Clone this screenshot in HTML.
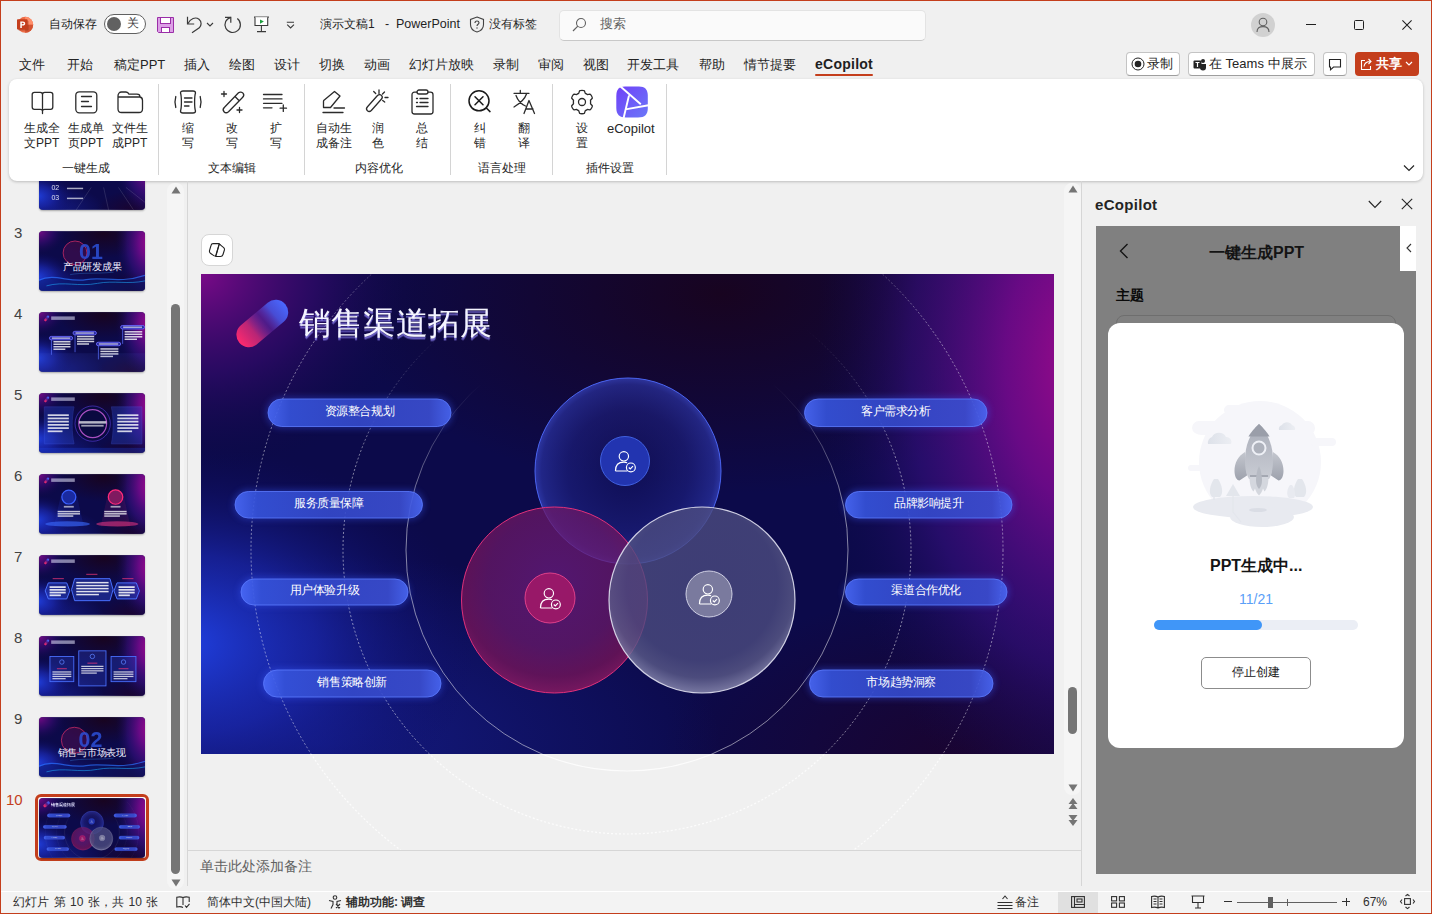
<!DOCTYPE html>
<html><head><meta charset="utf-8">
<style>
*{box-sizing:border-box;margin:0;padding:0}
html,body{width:1432px;height:914px;overflow:hidden}
body{position:relative;background:#f0f0f0;font-family:"Liberation Sans",sans-serif;color:#242424;font-size:13px}
.a{position:absolute}
.t{position:absolute;white-space:nowrap;line-height:1}
svg{position:absolute;overflow:visible}
</style></head><body>
<!-- window border -->
<div class="a" style="left:0;top:0;width:1432px;height:914px;border:1px solid #c43e1c;border-width:1px 1px 1px 1px;z-index:50;pointer-events:none"></div>

<!-- TITLE BAR -->
<svg style="left:17px;top:16px" width="17" height="17" viewBox="0 0 17 17">
 <circle cx="8.2" cy="8.8" r="8" fill="#ed6c47"/>
 <path d="M8.2 0.8 A8 8 0 0 1 16.2 8.8 L8.2 8.8Z" fill="#ff8f6b"/>
 <path d="M8.2 8.8 L16.2 8.8 A8 8 0 0 1 8.2 16.8Z" fill="#d35230"/>
 <rect x="1" y="4.8" width="10.6" height="9.6" rx="0.8" fill="#7a2a12" opacity=".35"/>
 <rect x="0" y="3.3" width="10.6" height="10.3" rx="0.8" fill="#c43e1c"/>
 <path d="M3.3 12V5.4h2.6c1.5 0 2.3.7 2.3 2s-.9 2.1-2.3 2.1H4.8V12z M4.8 6.7v1.6h1c.6 0 1-.3 1-.8s-.4-.8-1-.8z" fill="#fff"/>
</svg>
<div class="t" style="left:49px;top:18px;font-size:12px;color:#1f1f1f">自动保存</div>
<div class="a" style="left:104px;top:14px;width:42px;height:20px;border:1px solid #616161;border-radius:10px;background:#fff"></div>
<div class="a" style="left:107px;top:17px;width:14px;height:14px;border-radius:50%;background:#616161"></div>
<div class="t" style="left:127px;top:17px;font-size:12px;color:#424242">关</div>
<svg style="left:157px;top:17px" width="17" height="16" viewBox="0 0 17 16">
 <path d="M0.5 0.5H16.5V15.5H1.5L0.5 14.5Z" fill="#dca0e6" stroke="#9b2ea8" stroke-width="1"/>
 <rect x="3.5" y="0.5" width="10" height="6" fill="#fff" stroke="#9b2ea8" stroke-width="1"/>
 <rect x="4.5" y="10.5" width="8" height="5" fill="#fff" stroke="#9b2ea8" stroke-width="1"/>
</svg>
<svg style="left:185px;top:15px" width="20" height="20" viewBox="0 0 20 20">
 <path d="M2.5 1.8V9H9.2" fill="none" stroke="#3a3a3a" stroke-width="1.2"/>
 <path d="M2.8 8.7 C5.5 3.5 10.5 1.5 14 4.3 C17 6.8 16.5 10.5 14.3 12.8 L7 17.8" fill="none" stroke="#3a3a3a" stroke-width="1.2"/>
</svg>
<svg style="left:206px;top:22px" width="8" height="5" viewBox="0 0 8 5"><path d="M1 1l3 3 3-3" fill="none" stroke="#3a3a3a" stroke-width="1.1"/></svg>
<svg style="left:222px;top:15px" width="20" height="20" viewBox="0 0 20 20">
 <path d="M3 2.3H8.8V7.7" fill="none" stroke="#3a3a3a" stroke-width="1.2"/>
 <path d="M8.8 2.3 A7.7 7.7 0 1 0 15.3 3.6" fill="none" stroke="#3a3a3a" stroke-width="1.2"/>
</svg>
<svg style="left:252px;top:16px" width="18" height="17" viewBox="0 0 18 17">
 <path d="M2 1.1H17" stroke="#3a3a3a" stroke-width="1.1"/>
 <path d="M3 1.2V9.5H15.7V1.2" fill="#fff" stroke="#3a3a3a" stroke-width="1.1"/>
 <path d="M9.4 9.5V15.4M5 15.6H14" stroke="#3a3a3a" stroke-width="1.1"/>
 <path d="M8 3.4V7.7L11.9 5.5Z" fill="#1e9e3e"/>
</svg>
<svg style="left:283px;top:21px" width="12" height="8" viewBox="0 0 12 8"><path d="M3.8 1.3H11M4.2 3.6L7.6 6.9 11 3.6" fill="none" stroke="#3a3a3a" stroke-width="1.1"/></svg>
<div class="t" style="left:320px;top:18px;font-size:12px;color:#1f1f1f">演示文稿1</div><div class="t" style="left:385px;top:18px;font-size:12.5px;color:#1f1f1f">-</div><div class="t" style="left:396px;top:18px;font-size:12.5px;color:#1f1f1f">PowerPoint</div>
<svg style="left:469px;top:16px" width="16" height="17" viewBox="0 0 16 17">
 <path d="M8 1 L14.5 3.5 V8.5 C14.5 12.5 11.5 15 8 16 C4.5 15 1.5 12.5 1.5 8.5 V3.5Z" fill="none" stroke="#424242" stroke-width="1.1"/>
 <path d="M6 7 C6 5.5 7 5 8 5 C9.2 5 10 5.8 10 6.8 C10 8.3 8 8.3 8 10" fill="none" stroke="#424242" stroke-width="1.1"/>
 <circle cx="8" cy="12" r=".7" fill="#424242"/>
</svg>
<div class="t" style="left:489px;top:18px;font-size:12px;color:#1f1f1f">没有标签</div>
<div class="a" style="left:559px;top:10px;width:367px;height:31px;background:#fafafa;border:1px solid #e3e3e3;border-bottom-color:#c8c8c8;border-radius:5px"></div>
<svg style="left:572px;top:17px" width="15" height="15" viewBox="0 0 15 15"><circle cx="9" cy="6" r="4.5" fill="none" stroke="#616161" stroke-width="1.1"/><path d="M5.8 9.2L1 14" stroke="#616161" stroke-width="1.2"/></svg>
<div class="t" style="left:600px;top:17px;font-size:13px;color:#616161">搜索</div>
<div class="a" style="left:1251px;top:13px;width:24px;height:24px;border-radius:50%;background:#d1d1d1"></div>
<svg style="left:1255px;top:16px" width="16" height="17" viewBox="0 0 16 17"><circle cx="8" cy="6" r="3.8" fill="none" stroke="#616161" stroke-width="1.1"/><path d="M2 16 C2 12 4.5 10.6 8 10.6 C11.5 10.6 14 12 14 16" fill="none" stroke="#616161" stroke-width="1.1"/></svg>
<div class="a" style="left:1306px;top:24px;width:10px;height:1px;background:#1f1f1f"></div>
<div class="a" style="left:1354px;top:20px;width:10px;height:10px;border:1px solid #1f1f1f;border-radius:1.5px"></div>
<svg style="left:1402px;top:20px" width="10" height="10" viewBox="0 0 10 10"><path d="M0.4 0.4L9.6 9.6M9.6 0.4L0.4 9.6" stroke="#1f1f1f" stroke-width="1.05"/></svg>


<!-- MENU TABS -->
<div class="t" style="left:19px;top:58px;font-size:13px;color:#242424">文件</div>
<div class="t" style="left:67px;top:58px;font-size:13px;color:#242424">开始</div>
<div class="t" style="left:114px;top:58px;font-size:13px;color:#242424">稿定PPT</div>
<div class="t" style="left:184px;top:58px;font-size:13px;color:#242424">插入</div>
<div class="t" style="left:229px;top:58px;font-size:13px;color:#242424">绘图</div>
<div class="t" style="left:274px;top:58px;font-size:13px;color:#242424">设计</div>
<div class="t" style="left:319px;top:58px;font-size:13px;color:#242424">切换</div>
<div class="t" style="left:364px;top:58px;font-size:13px;color:#242424">动画</div>
<div class="t" style="left:409px;top:58px;font-size:13px;color:#242424">幻灯片放映</div>
<div class="t" style="left:493px;top:58px;font-size:13px;color:#242424">录制</div>
<div class="t" style="left:538px;top:58px;font-size:13px;color:#242424">审阅</div>
<div class="t" style="left:583px;top:58px;font-size:13px;color:#242424">视图</div>
<div class="t" style="left:627px;top:58px;font-size:13px;color:#242424">开发工具</div>
<div class="t" style="left:699px;top:58px;font-size:13px;color:#242424">帮助</div>
<div class="t" style="left:744px;top:58px;font-size:13px;color:#242424">情节提要</div>
<div class="t" style="left:815px;top:57px;font-size:14px;font-weight:bold;color:#1f1f1f;letter-spacing:.25px">eCopilot</div>
<div class="a" style="left:815px;top:74px;width:58px;height:2px;background:#c43e1c;border-radius:1px"></div>
<div class="a" style="left:1126px;top:52px;width:54px;height:24px;border:1px solid #c4c4c4;border-bottom-color:#9e9e9e;border-radius:4px;background:#fff"></div>
<svg style="left:1131px;top:57px" width="14" height="14" viewBox="0 0 14 14"><circle cx="7" cy="7" r="6" fill="none" stroke="#242424" stroke-width="1"/><circle cx="7" cy="7" r="3.3" fill="#242424"/></svg>
<div class="t" style="left:1147px;top:56.5px;font-size:13px;color:#242424">录制</div>
<div class="a" style="left:1188px;top:52px;width:127px;height:24px;border:1px solid #c4c4c4;border-bottom-color:#9e9e9e;border-radius:4px;background:#fff"></div>
<svg style="left:1193px;top:57px" width="14" height="14" viewBox="0 0 14 14"><circle cx="10" cy="4" r="2" fill="#242424"/><path d="M7 7h6v3.5a3 3 0 0 1-6 0z" fill="#242424"/><rect x="0.5" y="3.5" width="8" height="8" rx="1" fill="#242424"/><path d="M2.5 5.5h4M4.5 5.5v4.5" stroke="#fff" stroke-width="1.2"/></svg>
<div class="t" style="left:1209px;top:56.5px;font-size:13px;color:#242424">在 Teams 中展示</div>
<div class="a" style="left:1323px;top:52px;width:24px;height:24px;border:1px solid #c4c4c4;border-bottom-color:#9e9e9e;border-radius:4px;background:#fff"></div>
<svg style="left:1328px;top:58px" width="14" height="13" viewBox="0 0 14 13"><path d="M1.5 1.5h11v7.5h-7l-3 2.8v-2.8h-1z" fill="none" stroke="#242424" stroke-width="1.1"/></svg>
<div class="a" style="left:1355px;top:52px;width:64px;height:24px;border-radius:4px;background:#c43e1c"></div>
<svg style="left:1360px;top:57px" width="14" height="14" viewBox="0 0 14 14"><path d="M5 3.5H1.5v9h9V9" fill="none" stroke="#fff" stroke-width="1.1"/><path d="M4 9.5C4.5 6 7 4.5 10.5 4.5M8.5 2l2.5 2.5-2.5 2.5" fill="none" stroke="#fff" stroke-width="1.1"/></svg>
<div class="t" style="left:1376px;top:56.5px;font-size:13px;color:#fff;font-weight:bold">共享</div>
<svg style="left:1405px;top:61px" width="8" height="5" viewBox="0 0 8 5"><path d="M1 1l3 3 3-3" fill="none" stroke="#fff" stroke-width="1.2"/></svg>

<!-- RIBBON -->
<div class="a" style="left:9px;top:79px;width:1414px;height:102px;background:#fff;border-radius:8px;box-shadow:0 1px 3px rgba(0,0,0,.22)"></div>
<svg style="left:31px;top:91px" width="23" height="24" viewBox="0 0 23 24"><path d="M1.2 3.5 Q1.2 1.3 3.4 1.3 H9.3 Q11.5 1.3 11.5 3.5 Q11.5 1.3 13.7 1.3 H19.6 Q21.8 1.3 21.8 3.5 V16 Q21.8 18.3 19.6 18.3 H13.7 Q11.5 18.3 11.5 20.3 Q11.5 18.3 9.3 18.3 H3.4 Q1.2 18.3 1.2 16 Z M11.5 3.5 V22.5" fill="none" stroke="#2b2b2b" stroke-width="1.3" stroke-linecap="round" stroke-linejoin="round"/></svg>
<svg style="left:75px;top:91px" width="23" height="23" viewBox="0 0 23 23"><rect x="0.8" y="0.8" width="21" height="21" rx="3.5" fill="none" stroke="#2b2b2b" stroke-width="1.3" stroke-linecap="round" stroke-linejoin="round"/><path d="M6.5 5.5h10M6.5 10.5h7M6.5 15.5h10" fill="none" stroke="#2b2b2b" stroke-width="1.3" stroke-linecap="round" stroke-linejoin="round"/></svg>
<svg style="left:117px;top:91px" width="27" height="23" viewBox="0 0 27 23"><path d="M1 6 V5 C1 2.5 2.5 1 4.5 1 H9 C10.5 1 11.5 2 12 3.2 H20 C22 3.2 23 4.5 23 6 C24.5 6.3 25.5 7.5 25.5 9.5 V18 C25.5 20.5 24 21.5 22 21.5 H4.5 C2.5 21.5 1 20.5 1 18 Z M1 6 H23" fill="none" stroke="#2b2b2b" stroke-width="1.3" stroke-linecap="round" stroke-linejoin="round"/></svg>
<svg style="left:174px;top:90px" width="28" height="25" viewBox="0 0 28 25"><path d="M6.5 3 C6.5 1.6 7.5 1 9 1 H19 C20.5 1 21.5 1.6 21.5 3 C20.3 6.5 20.3 17.5 21.5 21 C21.5 22.4 20.5 23 19 23 H9 C7.5 23 6.5 22.4 6.5 21 C7.7 17.5 7.7 6.5 6.5 3Z" fill="none" stroke="#2b2b2b" stroke-width="1.3" stroke-linecap="round" stroke-linejoin="round"/><path d="M10.5 8h7.5M10.5 12h7.5M10.5 16h4.5" fill="none" stroke="#2b2b2b" stroke-width="1.3" stroke-linecap="round" stroke-linejoin="round"/><path d="M1.8 6.5 C0.9 9.5 0.9 14.5 1.8 17.5M26.2 6.5 C27.1 9.5 27.1 14.5 26.2 17.5" fill="none" stroke="#2b2b2b" stroke-width="1.3" stroke-linecap="round" stroke-linejoin="round"/></svg>
<svg style="left:220px;top:90px" width="25" height="25" viewBox="0 0 25 25"><path d="M18.5 2.8 C20 1.5 22 2 23 3.2 C24 4.4 23.8 6.3 22.5 7.5 L8.5 21.7 C7 23 5 22.8 4 21.7 C3 20.6 3 18.6 4.5 17.2Z M15 6.5 L19.2 10.8" fill="none" stroke="#2b2b2b" stroke-width="1.3" stroke-linecap="round" stroke-linejoin="round"/><path d="M4 1.5v5M1.5 4h5M19.5 17.5v5M17 20h5" fill="none" stroke="#2b2b2b" stroke-width="1.3" stroke-linecap="round" stroke-linejoin="round"/></svg>
<svg style="left:262px;top:93px" width="28" height="20" viewBox="0 0 28 20"><path d="M1.5 1.5h18.5M1.5 5.9h18.5M1.5 10.3h18.5M1.5 14.8h8.5M21.3 12v6.4M18.1 15.2h6.4" fill="none" stroke="#2b2b2b" stroke-width="1.3" stroke-linecap="round" stroke-linejoin="round"/></svg>
<svg style="left:322px;top:90px" width="24" height="24" viewBox="0 0 24 24"><path d="M12.5 1.5 L18 6 L8.5 17.5 H1.5 V11.5 C1.5 11 1.7 10.6 2 10.2Z" fill="none" stroke="#2b2b2b" stroke-width="1.3" stroke-linecap="round" stroke-linejoin="round"/><path d="M12 18h10.5M1 22.5h20" fill="none" stroke="#2b2b2b" stroke-width="1.3" stroke-linecap="round" stroke-linejoin="round"/></svg>
<svg style="left:365px;top:89px" width="25" height="25" viewBox="0 0 25 25"><path d="M12.5 6.5 C13.8 5.2 15.5 5.4 16.5 6.4 C17.5 7.4 17.5 9 16.3 10.3 L6.3 21.5 C5 22.8 3.3 22.6 2.3 21.6 C1.3 20.6 1.3 19 2.5 17.7Z" fill="none" stroke="#2b2b2b" stroke-width="1.3" stroke-linecap="round" stroke-linejoin="round"/><path d="M14 1v3.5M8.7 2.5l2 2M19.5 3l-2 2M23 8.5h-3M19.7 13l-2-1.5" fill="none" stroke="#2b2b2b" stroke-width="1.3" stroke-linecap="round" stroke-linejoin="round"/></svg>
<svg style="left:411px;top:89px" width="23" height="26" viewBox="0 0 23 26"><path d="M6 3.2 H3.5 C2 3.2 1 4.2 1 5.7 V22.5 C1 24 2 25 3.5 25 H19.5 C21 25 22 24 22 22.5 V5.7 C22 4.2 21 3.2 19.5 3.2 H17" fill="none" stroke="#2b2b2b" stroke-width="1.3" stroke-linecap="round" stroke-linejoin="round"/><rect x="6" y="1" width="11" height="4" rx="2" fill="none" stroke="#2b2b2b" stroke-width="1.3" stroke-linecap="round" stroke-linejoin="round"/><path d="M5.5 9.5h1M9 9.5h8M5.5 13.5h1M9 13.5h8M5.5 17.5h11.5" fill="none" stroke="#2b2b2b" stroke-width="1.3" stroke-linecap="round" stroke-linejoin="round"/></svg>
<svg style="left:468px;top:90px" width="24" height="24" viewBox="0 0 24 24"><circle cx="11" cy="10.8" r="10" fill="none" stroke="#1a1a1a" stroke-width="1.5"/><path d="M7 6.8l8 8M15 6.8l-8 8M18.3 18l3.7 3.6" fill="none" stroke="#1a1a1a" stroke-width="1.5" stroke-linecap="round"/></svg>
<svg style="left:513px;top:90px" width="23" height="24" viewBox="0 0 23 24"><path d="M1 3.3h15M7.3 0.5v2.8M3 5.5 C5 11 9 14.5 12.5 16M13.5 4 C11.5 10 6 14 1 17" fill="none" stroke="#2b2b2b" stroke-width="1.3" stroke-linecap="round" stroke-linejoin="round"/><path d="M11 23.5 L16 10.5 L21.5 23.5M12.8 19h7.2" fill="none" stroke="#2b2b2b" stroke-width="1.3" stroke-linecap="round" stroke-linejoin="round"/></svg>
<svg style="left:569px;top:89px" width="26" height="26" viewBox="0 0 26 26"><path d="M10.6 1.8 C11.3 1.1 14.7 1.1 15.4 1.8 L16.3 4.4 C17 4.7 17.7 5.1 18.3 5.6 L21 5.1 C21.9 5.4 23.6 8.4 23.3 9.3 L21.5 11.3 C21.6 12.1 21.6 13.9 21.5 14.7 L23.3 16.7 C23.6 17.6 21.9 20.6 21 20.9 L18.3 20.4 C17.7 20.9 17 21.3 16.3 21.6 L15.4 24.2 C14.7 24.9 11.3 24.9 10.6 24.2 L9.7 21.6 C9 21.3 8.3 20.9 7.7 20.4 L5 20.9 C4.1 20.6 2.4 17.6 2.7 16.7 L4.5 14.7 C4.4 13.9 4.4 12.1 4.5 11.3 L2.7 9.3 C2.4 8.4 4.1 5.4 5 5.1 L7.7 5.6 C8.3 5.1 9 4.7 9.7 4.4Z" fill="none" stroke="#2b2b2b" stroke-width="1.3" stroke-linecap="round" stroke-linejoin="round"/><circle cx="13" cy="13" r="3.5" fill="none" stroke="#2b2b2b" stroke-width="1.3" stroke-linecap="round" stroke-linejoin="round"/></svg>
<svg style="left:616px;top:86px" width="32" height="32" viewBox="0 0 32 32"><defs><linearGradient id="eg" x1="0" y1="0" x2="1" y2="1"><stop offset="0" stop-color="#7040f8"/><stop offset="1" stop-color="#6a78f8"/></linearGradient></defs><path d="M9 0.5 H23 C29 0.5 31.8 3.5 31.8 10 V22 C31.8 28.5 29 31.5 22 31.5 H10 C3.5 31.5 0.3 28.5 0.3 22 V10 C0.3 3.5 3 0.5 9 0.5Z" fill="url(#eg)"/><path d="M4.5 0.5 L24.8 18.2 M13 9.5 L7.6 32 M9.5 23.4 L32.5 19.2" stroke="#fff" stroke-width="1.9"/></svg>
<div class="t" style="left:24px;top:121px;font-size:12px;line-height:15px;color:#262626">生成全<br>文PPT</div>
<div class="t" style="left:68px;top:121px;font-size:12px;line-height:15px;color:#262626">生成单<br>页PPT</div>
<div class="t" style="left:112px;top:121px;font-size:12px;line-height:15px;color:#262626">文件生<br>成PPT</div>
<div class="t" style="left:182px;top:121px;font-size:12px;line-height:15px;color:#262626">缩<br>写</div>
<div class="t" style="left:226px;top:121px;font-size:12px;line-height:15px;color:#262626">改<br>写</div>
<div class="t" style="left:270px;top:121px;font-size:12px;line-height:15px;color:#262626">扩<br>写</div>
<div class="t" style="left:316px;top:121px;font-size:12px;line-height:15px;color:#262626">自动生<br>成备注</div>
<div class="t" style="left:372px;top:121px;font-size:12px;line-height:15px;color:#262626">润<br>色</div>
<div class="t" style="left:416px;top:121px;font-size:12px;line-height:15px;color:#262626">总<br>结</div>
<div class="t" style="left:474px;top:121px;font-size:12px;line-height:15px;color:#262626">纠<br>错</div>
<div class="t" style="left:518px;top:121px;font-size:12px;line-height:15px;color:#262626">翻<br>译</div>
<div class="t" style="left:576px;top:121px;font-size:12px;line-height:15px;color:#262626">设<br>置</div>
<div class="t" style="left:607px;top:121px;font-size:13px;line-height:15px;color:#262626">eCopilot</div>
<div class="t" style="left:62px;top:162px;font-size:12px;line-height:13px;color:#262626">一键生成</div>
<div class="t" style="left:208px;top:162px;font-size:12px;line-height:13px;color:#262626">文本编辑</div>
<div class="t" style="left:355px;top:162px;font-size:12px;line-height:13px;color:#262626">内容优化</div>
<div class="t" style="left:478px;top:162px;font-size:12px;line-height:13px;color:#262626">语言处理</div>
<div class="t" style="left:586px;top:162px;font-size:12px;line-height:13px;color:#262626">插件设置</div>
<div class="a" style="left:158px;top:84px;width:1px;height:91px;background:#d4d4d4"></div>
<div class="a" style="left:304px;top:84px;width:1px;height:91px;background:#d4d4d4"></div>
<div class="a" style="left:450px;top:84px;width:1px;height:91px;background:#d4d4d4"></div>
<div class="a" style="left:552px;top:84px;width:1px;height:91px;background:#d4d4d4"></div>
<div class="a" style="left:666px;top:84px;width:1px;height:91px;background:#d4d4d4"></div>
<svg style="left:1403px;top:164px" width="12" height="8" viewBox="0 0 12 8"><path d="M1 1.5l5 5 5-5" fill="none" stroke="#262626" stroke-width="1.2"/></svg>

<!-- LEFT PANE -->
<div class="a" style="left:0;top:181px;width:187px;height:710px;overflow:hidden">
<div class="a" style="left:39px;top:-31px;width:106px;height:60px;border-radius:4px;overflow:hidden;box-shadow:0 1px 2px rgba(0,0,0,.3)"><svg width="106" height="60" viewBox="0 0 853 480" style="left:0;top:0;font-family:'Liberation Sans',sans-serif"><use href="#slidebg"/><text x="100" y="322" font-size="56" fill="#fff" opacity=".85">02</text><rect x="225" y="302" width="130" height="12" fill="#fff" opacity=".65"/><text x="100" y="402" font-size="56" fill="#fff" opacity=".85">03</text><rect x="225" y="382" width="130" height="12" fill="#fff" opacity=".65"/><path d="M420 300 L300 480 M520 300 L560 480 M640 300 L760 480 M700 300 L853 420" stroke="#fff" stroke-opacity=".2" stroke-width="5"/></svg></div>
<div class="a" style="left:39px;top:50px;width:106px;height:60px;border-radius:4px;overflow:hidden;box-shadow:0 1px 2px rgba(0,0,0,.3)"><svg width="106" height="60" viewBox="0 0 853 480" style="left:0;top:0;font-family:'Liberation Sans',sans-serif"><use href="#slidebg"/><circle cx="290" cy="175" r="96" fill="#5a1050" fill-opacity=".45" stroke="#e0306a" stroke-opacity=".8" stroke-width="7"/><text x="322" y="222" font-size="172" font-weight="bold" fill="#2c50d8" opacity=".85">01</text><path d="M0 400 C120 340 240 420 380 395 C520 370 640 430 853 360 V480 H0Z" fill="#0a1a70" opacity=".5"/><path d="M0 395 C120 335 240 415 380 390 C520 365 640 425 853 355" fill="none" stroke="#2a70ff" stroke-width="10" opacity=".7"/><path d="M60 440 C200 400 320 450 470 420 C600 395 720 430 853 400" fill="none" stroke="#20b0ff" stroke-width="8" opacity=".55"/><path d="M250 350 C350 330 450 345 600 330" fill="none" stroke="#40a0ff" stroke-width="6" opacity=".4"/><text x="193" y="312" font-size="80" fill="#eef" letter-spacing="-2">产品研发成果</text></svg></div>
<div class="t" style="left:14px;top:44px;font-size:15px;color:#424242">3</div>
<div class="a" style="left:39px;top:131px;width:106px;height:60px;border-radius:4px;overflow:hidden;box-shadow:0 1px 2px rgba(0,0,0,.3)"><svg width="106" height="60" viewBox="0 0 853 480" style="left:0;top:0;font-family:'Liberation Sans',sans-serif"><use href="#slidebg"/><g transform="translate(62 50) rotate(-52)"><rect x="-26" y="-10" width="52" height="20" rx="10" fill="url(#logoG)"/></g><rect x="98" y="34" width="190" height="28" fill="#e8e8ff" opacity=".55"/><rect x="84" y="195" width="187" height="28" rx="14" fill="#2a2aa0" stroke="#6a6aff" stroke-width="7"/><rect x="104" y="203" width="147" height="12" fill="#fff" opacity=".6"/><rect x="96" y="223" width="8" height="120" fill="#5a70ff" opacity=".7"/><rect x="116" y="232" width="137" height="12" fill="#fff" opacity="0.8"/><rect x="116" y="252" width="137" height="12" fill="#fff" opacity="0.8"/><rect x="116" y="272" width="137" height="12" fill="#fff" opacity="0.8"/><rect x="116" y="292" width="95.89999999999999" height="12" fill="#fff" opacity="0.8"/><rect x="274" y="154" width="188" height="28" rx="14" fill="#2a2aa0" stroke="#6a6aff" stroke-width="7"/><rect x="294" y="162" width="148" height="12" fill="#fff" opacity=".6"/><rect x="286" y="182" width="8" height="140" fill="#5a70ff" opacity=".7"/><rect x="306" y="190" width="138" height="12" fill="#fff" opacity="0.8"/><rect x="306" y="210" width="138" height="12" fill="#fff" opacity="0.8"/><rect x="306" y="230" width="138" height="12" fill="#fff" opacity="0.8"/><rect x="306" y="250" width="96.6" height="12" fill="#fff" opacity="0.8"/><rect x="462" y="242" width="195" height="28" rx="14" fill="#2a2aa0" stroke="#6a6aff" stroke-width="7"/><rect x="482" y="250" width="155" height="12" fill="#fff" opacity=".6"/><rect x="474" y="270" width="8" height="110" fill="#5a70ff" opacity=".7"/><rect x="494" y="290" width="145" height="12" fill="#fff" opacity="0.8"/><rect x="494" y="310" width="145" height="12" fill="#fff" opacity="0.8"/><rect x="494" y="330" width="145" height="12" fill="#fff" opacity="0.8"/><rect x="494" y="350" width="101.5" height="12" fill="#fff" opacity="0.8"/><rect x="657" y="107" width="192" height="28" rx="14" fill="#2a2aa0" stroke="#6a6aff" stroke-width="7"/><rect x="677" y="115" width="152" height="12" fill="#fff" opacity=".6"/><rect x="669" y="135" width="8" height="120" fill="#5a70ff" opacity=".7"/><rect x="689" y="152" width="142" height="12" fill="#fff" opacity="0.8"/><rect x="689" y="172" width="142" height="12" fill="#fff" opacity="0.8"/><rect x="689" y="192" width="142" height="12" fill="#fff" opacity="0.8"/><rect x="689" y="212" width="99.39999999999999" height="12" fill="#fff" opacity="0.8"/><rect x="0" y="330" width="853" height="150" fill="#4a5ad0" opacity=".12"/></svg></div>
<div class="t" style="left:14px;top:125px;font-size:15px;color:#424242">4</div>
<div class="a" style="left:39px;top:212px;width:106px;height:60px;border-radius:4px;overflow:hidden;box-shadow:0 1px 2px rgba(0,0,0,.3)"><svg width="106" height="60" viewBox="0 0 853 480" style="left:0;top:0;font-family:'Liberation Sans',sans-serif"><use href="#slidebg"/><g transform="translate(62 50) rotate(-52)"><rect x="-26" y="-10" width="52" height="20" rx="10" fill="url(#logoG)"/></g><rect x="98" y="34" width="190" height="28" fill="#e8e8ff" opacity=".55"/><path d="M43 110 H282 C262 200 262 320 282 408 H43Z" fill="#2a48d0" opacity=".35" stroke="#4a6aff" stroke-width="6"/><path d="M828 110 H582 C602 200 602 320 582 408 H828Z" fill="#2a48d0" opacity=".35" stroke="#4a6aff" stroke-width="6"/><circle cx="432" cy="245" r="142" fill="#0a0a40" stroke="#6a4aff" stroke-opacity=".5" stroke-width="8"/><circle cx="432" cy="245" r="112" fill="none" stroke="#d060e0" stroke-width="10" opacity=".8"/><rect x="322" y="225" width="220" height="20" fill="#fff" opacity=".7"/><rect x="340" y="255" width="180" height="14" fill="#fff" opacity=".6"/><rect x="70" y="170" width="170" height="14" fill="#fff" opacity="0.8"/><rect x="70" y="196" width="170" height="14" fill="#fff" opacity="0.8"/><rect x="70" y="222" width="170" height="14" fill="#fff" opacity="0.8"/><rect x="70" y="248" width="170" height="14" fill="#fff" opacity="0.8"/><rect x="70" y="274" width="170" height="14" fill="#fff" opacity="0.8"/><rect x="70" y="300" width="118.99999999999999" height="14" fill="#fff" opacity="0.8"/><rect x="630" y="170" width="170" height="14" fill="#fff" opacity="0.8"/><rect x="630" y="196" width="170" height="14" fill="#fff" opacity="0.8"/><rect x="630" y="222" width="170" height="14" fill="#fff" opacity="0.8"/><rect x="630" y="248" width="170" height="14" fill="#fff" opacity="0.8"/><rect x="630" y="274" width="170" height="14" fill="#fff" opacity="0.8"/><rect x="630" y="300" width="118.99999999999999" height="14" fill="#fff" opacity="0.8"/><rect x="0" y="440" width="853" height="40" fill="#2050ff" opacity=".25"/></svg></div>
<div class="t" style="left:14px;top:206px;font-size:15px;color:#424242">5</div>
<div class="a" style="left:39px;top:293px;width:106px;height:60px;border-radius:4px;overflow:hidden;box-shadow:0 1px 2px rgba(0,0,0,.3)"><svg width="106" height="60" viewBox="0 0 853 480" style="left:0;top:0;font-family:'Liberation Sans',sans-serif"><use href="#slidebg"/><g transform="translate(62 50) rotate(-52)"><rect x="-26" y="-10" width="52" height="20" rx="10" fill="url(#logoG)"/></g><rect x="98" y="34" width="190" height="28" fill="#e8e8ff" opacity=".55"/><path d="M180 150 L120 420 H360 L300 150Z" fill="#3050ff" opacity=".12"/><path d="M556 150 L496 420 H736 L676 150Z" fill="#ff3080" opacity=".1"/><circle cx="240" cy="184" r="56" fill="#1a2aa0" stroke="#3a60ff" stroke-width="10"/><circle cx="616" cy="184" r="58" fill="#801a60" stroke="#ff2a7a" stroke-width="10"/><rect x="200" y="255" width="80" height="14" fill="#fff" opacity=".6"/><rect x="576" y="255" width="80" height="14" fill="#fff" opacity=".6"/><rect x="150" y="295" width="180" height="12" fill="#fff" opacity="0.75"/><rect x="150" y="313" width="180" height="12" fill="#fff" opacity="0.75"/><rect x="150" y="331" width="125.99999999999999" height="12" fill="#fff" opacity="0.75"/><rect x="525" y="295" width="180" height="12" fill="#fff" opacity="0.75"/><rect x="525" y="313" width="180" height="12" fill="#fff" opacity="0.75"/><rect x="525" y="331" width="125.99999999999999" height="12" fill="#fff" opacity="0.75"/><ellipse cx="230" cy="400" rx="180" ry="22" fill="#3a6aff" opacity=".6"/><ellipse cx="630" cy="400" rx="170" ry="22" fill="#ff3a8a" opacity=".5"/></svg></div>
<div class="t" style="left:14px;top:287px;font-size:15px;color:#424242">6</div>
<div class="a" style="left:39px;top:374px;width:106px;height:60px;border-radius:4px;overflow:hidden;box-shadow:0 1px 2px rgba(0,0,0,.3)"><svg width="106" height="60" viewBox="0 0 853 480" style="left:0;top:0;font-family:'Liberation Sans',sans-serif"><use href="#slidebg"/><g transform="translate(62 50) rotate(-52)"><rect x="-26" y="-10" width="52" height="20" rx="10" fill="url(#logoG)"/></g><rect x="98" y="34" width="190" height="28" fill="#e8e8ff" opacity=".55"/><path d="M75 223 H223 L248 287.5 L223 352 H75 L50 287.5Z" fill="#2a40c0" fill-opacity=".5" stroke="#4a70ff" stroke-width="8"/><path d="M287 189 H571 L596 277.5 L571 366 H287 L262 277.5Z" fill="#2a40c0" fill-opacity=".5" stroke="#4a70ff" stroke-width="8"/><path d="M628 223 H783 L808 287.5 L783 352 H628 L603 287.5Z" fill="#2a40c0" fill-opacity=".5" stroke="#4a70ff" stroke-width="8"/><rect x="85" y="250" width="130" height="14" fill="#fff" opacity="0.85"/><rect x="85" y="272" width="130" height="14" fill="#fff" opacity="0.85"/><rect x="85" y="294" width="130" height="14" fill="#fff" opacity="0.85"/><rect x="85" y="316" width="91.0" height="14" fill="#fff" opacity="0.85"/><rect x="300" y="215" width="260" height="12" fill="#fff" opacity="0.85"/><rect x="300" y="239" width="260" height="12" fill="#fff" opacity="0.85"/><rect x="300" y="263" width="260" height="12" fill="#fff" opacity="0.85"/><rect x="300" y="287" width="260" height="12" fill="#fff" opacity="0.85"/><rect x="300" y="311" width="182.0" height="12" fill="#fff" opacity="0.85"/><rect x="640" y="250" width="130" height="14" fill="#fff" opacity="0.85"/><rect x="640" y="272" width="130" height="14" fill="#fff" opacity="0.85"/><rect x="640" y="294" width="130" height="14" fill="#fff" opacity="0.85"/><rect x="640" y="316" width="91.0" height="14" fill="#fff" opacity="0.85"/><rect x="110" y="185" width="90" height="8" fill="#ff3a7a" opacity=".7"/><rect x="380" y="150" width="90" height="8" fill="#ff3a7a" opacity=".7"/><rect x="670" y="185" width="90" height="8" fill="#ff3a7a" opacity=".7"/></svg></div>
<div class="t" style="left:14px;top:368px;font-size:15px;color:#424242">7</div>
<div class="a" style="left:39px;top:455px;width:106px;height:60px;border-radius:4px;overflow:hidden;box-shadow:0 1px 2px rgba(0,0,0,.3)"><svg width="106" height="60" viewBox="0 0 853 480" style="left:0;top:0;font-family:'Liberation Sans',sans-serif"><use href="#slidebg"/><g transform="translate(62 50) rotate(-52)"><rect x="-26" y="-10" width="52" height="20" rx="10" fill="url(#logoG)"/></g><rect x="98" y="34" width="190" height="28" fill="#e8e8ff" opacity=".55"/><rect x="88" y="163" width="192" height="203" fill="#2a40c0" fill-opacity=".35" stroke="#4a70ff" stroke-width="7"/><circle cx="184.0" cy="208" r="18" fill="none" stroke="#5a80ff" stroke-width="6"/><rect x="144.0" y="258" width="80" height="8" fill="#ff3a7a" opacity=".7"/><rect x="108" y="283" width="152" height="10" fill="#fff" opacity="0.75"/><rect x="108" y="301" width="152" height="10" fill="#fff" opacity="0.75"/><rect x="108" y="319" width="152" height="10" fill="#fff" opacity="0.75"/><rect x="108" y="337" width="106.39999999999999" height="10" fill="#fff" opacity="0.75"/><rect x="320" y="118" width="219" height="282" fill="#2a40c0" fill-opacity=".35" stroke="#4a70ff" stroke-width="7"/><circle cx="429.5" cy="163" r="18" fill="none" stroke="#5a80ff" stroke-width="6"/><rect x="389.5" y="213" width="80" height="8" fill="#ff3a7a" opacity=".7"/><rect x="340" y="238" width="179" height="10" fill="#fff" opacity="0.75"/><rect x="340" y="256" width="179" height="10" fill="#fff" opacity="0.75"/><rect x="340" y="274" width="179" height="10" fill="#fff" opacity="0.75"/><rect x="340" y="292" width="125.3" height="10" fill="#fff" opacity="0.75"/><rect x="580" y="163" width="200" height="203" fill="#2a40c0" fill-opacity=".35" stroke="#4a70ff" stroke-width="7"/><circle cx="680.0" cy="208" r="18" fill="none" stroke="#5a80ff" stroke-width="6"/><rect x="640.0" y="258" width="80" height="8" fill="#ff3a7a" opacity=".7"/><rect x="600" y="283" width="160" height="10" fill="#fff" opacity="0.75"/><rect x="600" y="301" width="160" height="10" fill="#fff" opacity="0.75"/><rect x="600" y="319" width="160" height="10" fill="#fff" opacity="0.75"/><rect x="600" y="337" width="112.0" height="10" fill="#fff" opacity="0.75"/></svg></div>
<div class="t" style="left:14px;top:449px;font-size:15px;color:#424242">8</div>
<div class="a" style="left:39px;top:536px;width:106px;height:60px;border-radius:4px;overflow:hidden;box-shadow:0 1px 2px rgba(0,0,0,.3)"><svg width="106" height="60" viewBox="0 0 853 480" style="left:0;top:0;font-family:'Liberation Sans',sans-serif"><use href="#slidebg"/><circle cx="285" cy="186" r="105" fill="#5a1050" fill-opacity=".45" stroke="#e0306a" stroke-opacity=".8" stroke-width="7"/><text x="318" y="242" font-size="172" font-weight="bold" fill="#2c50d8" opacity=".85">02</text><path d="M0 400 C120 340 240 420 380 395 C520 370 640 430 853 360 V480 H0Z" fill="#0a1a70" opacity=".5"/><path d="M0 395 C120 335 240 415 380 390 C520 365 640 425 853 355" fill="none" stroke="#2a70ff" stroke-width="10" opacity=".7"/><path d="M60 440 C200 400 320 450 470 420 C600 395 720 430 853 400" fill="none" stroke="#20b0ff" stroke-width="8" opacity=".55"/><path d="M250 350 C350 330 450 345 600 330" fill="none" stroke="#40a0ff" stroke-width="6" opacity=".4"/><text x="150" y="312" font-size="80" fill="#eef" letter-spacing="-2">销售与市场表现</text></svg></div>
<div class="t" style="left:14px;top:530px;font-size:15px;color:#424242">9</div>
<div class="a" style="left:35px;top:613px;width:114px;height:67px;border:3px solid #c43e1c;border-radius:6px;background:#fff"></div>
<div class="a" style="left:39px;top:617px;width:106px;height:60px;border-radius:4px;overflow:hidden;box-shadow:0 1px 2px rgba(0,0,0,.3)"><svg width="106" height="60" viewBox="0 0 853 480" style="left:0;top:0;font-family:'Liberation Sans',sans-serif"><use href="#slidecontent"/></svg></div>
<div class="t" style="left:6px;top:611px;font-size:15px;color:#c43e1c">10</div>
<div class="a" style="left:167px;top:2px;width:17px;height:706px;background:#f5f5f5;border-radius:8px"></div>
<div class="a" style="left:171px;top:123px;width:9px;height:570px;background:#757575;border-radius:5px"></div>
<svg style="left:171px;top:5px" width="10" height="8" viewBox="0 0 10 8"><path d="M5 0.5L9.5 7.5H0.5Z" fill="#757575"/></svg>
<svg style="left:171px;top:698px" width="10" height="8" viewBox="0 0 10 8"><path d="M5 7.5L9.5 0.5H0.5Z" fill="#757575"/></svg>
</div>
<!-- SLIDE AREA -->
<div class="a" style="left:187px;top:181px;width:1px;height:705px;background:#d6d6d6"></div>
<div class="a" style="left:1081px;top:181px;width:1px;height:705px;background:#d6d6d6"></div>
<div class="a" style="left:188px;top:850px;width:893px;height:1px;background:#d6d6d6"></div>
<div id="slide" class="a" style="left:201px;top:274px;width:853px;height:480px;background:#0c0a45;overflow:hidden"><svg width="853" height="480" viewBox="0 0 853 480" style="left:0;top:0;font-family:'Liberation Sans',sans-serif">
<defs>
 <radialGradient id="bgTL" cx="0" cy="0" r="1" gradientUnits="userSpaceOnUse" gradientTransform="translate(0 0) scale(230 200)"><stop offset="0" stop-color="#7a0a88"/><stop offset=".5" stop-color="#3a0a70" stop-opacity=".6"/><stop offset="1" stop-color="#0a0840" stop-opacity="0"/></radialGradient>
 <radialGradient id="bgR" cx="0" cy="0" r="1" gradientUnits="userSpaceOnUse" gradientTransform="translate(885 90) scale(270 470)"><stop offset="0" stop-color="#a00a8a"/><stop offset=".3" stop-color="#780a90" stop-opacity=".85"/><stop offset=".65" stop-color="#40108a" stop-opacity=".5"/><stop offset="1" stop-color="#100a50" stop-opacity="0"/></radialGradient>
 <radialGradient id="bgBL" cx="0" cy="0" r="1" gradientUnits="userSpaceOnUse" gradientTransform="translate(-20 370) scale(300 200)"><stop offset="0" stop-color="#2040e0"/><stop offset=".45" stop-color="#1a28b0" stop-opacity=".7"/><stop offset="1" stop-color="#0c0a60" stop-opacity="0"/></radialGradient>
 <radialGradient id="bgBL2" cx="0" cy="0" r="1" gradientUnits="userSpaceOnUse" gradientTransform="translate(120 470) scale(400 190)"><stop offset="0" stop-color="#1a28b0" stop-opacity=".55"/><stop offset="1" stop-color="#1a28b0" stop-opacity="0"/></radialGradient>
 <radialGradient id="bgTop" cx="0" cy="0" r="1" gradientUnits="userSpaceOnUse" gradientTransform="translate(520 20) scale(380 200)"><stop offset="0" stop-color="#180420"/><stop offset="1" stop-color="#180420" stop-opacity="0"/></radialGradient>
 <radialGradient id="bgBR" cx="0" cy="0" r="1" gradientUnits="userSpaceOnUse" gradientTransform="translate(760 480) scale(300 160)"><stop offset="0" stop-color="#1a0430"/><stop offset="1" stop-color="#1a0430" stop-opacity="0"/></radialGradient>
 <linearGradient id="pillg" x1="0" y1="0" x2="1" y2="0"><stop offset="0" stop-color="#4a6af8"/><stop offset=".12" stop-color="#3552d8"/><stop offset=".5" stop-color="#3448c8"/><stop offset=".88" stop-color="#3a4ccc"/><stop offset="1" stop-color="#4a68f4"/></linearGradient>
 <filter id="glow" x="-20%" y="-60%" width="140%" height="220%"><feGaussianBlur stdDeviation="3"/></filter>
 <filter id="blur6" x="-50%" y="-50%" width="200%" height="200%"><feGaussianBlur stdDeviation="6"/></filter>
 <radialGradient id="cBlue" cx=".5" cy=".5" r=".5"><stop offset="0" stop-color="#121260" stop-opacity=".5"/><stop offset=".65" stop-color="#20248a" stop-opacity=".55"/><stop offset=".93" stop-color="#2c35a8" stop-opacity=".65"/><stop offset="1" stop-color="#3a48c8" stop-opacity=".7"/></radialGradient>
 <radialGradient id="cPink" cx=".5" cy=".4" r=".6"><stop offset="0" stop-color="#641a7a" stop-opacity=".8"/><stop offset=".6" stop-color="#6a1868" stop-opacity=".75"/><stop offset=".85" stop-color="#7a1458" stop-opacity=".75"/><stop offset="1" stop-color="#901a60" stop-opacity=".8"/></radialGradient>
 <radialGradient id="cWhite" cx=".5" cy=".42" r=".58"><stop offset="0" stop-color="#4a4a80" stop-opacity=".8"/><stop offset=".7" stop-color="#4c4c80" stop-opacity=".8"/><stop offset=".86" stop-color="#5a5a88" stop-opacity=".82"/><stop offset="1" stop-color="#8a8ab0" stop-opacity=".85"/></radialGradient>
 <linearGradient id="logoG" x1="0" y1="0" x2="1" y2="0"><stop offset="0" stop-color="#ff2a6e"/><stop offset=".3" stop-color="#d02a78" stop-opacity=".85"/><stop offset=".55" stop-color="#6a30b0" stop-opacity=".45"/><stop offset=".75" stop-color="#4a58e8" stop-opacity=".85"/><stop offset="1" stop-color="#4a68ff"/></linearGradient>
 <filter id="tshadow" x="-10%" y="-20%" width="120%" height="150%"><feDropShadow dx="0" dy="2.5" stdDeviation="0.6" flood-color="#8a7ff0" flood-opacity=".75"/></filter>
</defs>
<g id="slidecontent"><g id="slidebg"><rect width="853" height="480" fill="#0c0a4a"/>
<rect width="853" height="480" fill="url(#bgTop)"/>
<rect width="853" height="480" fill="url(#bgBR)"/>
<rect width="853" height="480" fill="url(#bgR)"/>
<rect width="853" height="480" fill="url(#bgTL)"/>
<rect width="853" height="480" fill="url(#bgBL2)"/>
<rect width="853" height="480" fill="url(#bgBL)"/></g>
<linearGradient id="s1" gradientUnits="userSpaceOnUse" x1="0" y1="110" x2="0" y2="230"><stop offset="0" stop-color="#fff" stop-opacity="0"/><stop offset="1" stop-color="#fff" stop-opacity=".5"/></linearGradient>
<linearGradient id="s2" gradientUnits="userSpaceOnUse" x1="0" y1="55" x2="0" y2="190"><stop offset="0" stop-color="#fff" stop-opacity="0"/><stop offset="1" stop-color="#fff" stop-opacity=".5"/></linearGradient>
<linearGradient id="s3" gradientUnits="userSpaceOnUse" x1="0" y1="-60" x2="0" y2="60"><stop offset="0" stop-color="#fff" stop-opacity="0"/><stop offset="1" stop-color="#fff" stop-opacity=".45"/></linearGradient>
<circle cx="426" cy="276" r="221" fill="none" stroke="url(#s1)" stroke-width="1"/>
<circle cx="426" cy="276" r="284" fill="none" stroke="url(#s2)" stroke-width="1" stroke-dasharray="2 2"/>
<circle cx="426" cy="276" r="376" fill="none" stroke="url(#s3)" stroke-width="1" stroke-dasharray="2 2"/>
<circle cx="427" cy="197" r="93" fill="url(#cBlue)" stroke="#4a64f0" stroke-width="1"/>
<circle cx="353.5" cy="326" r="93" fill="url(#cPink)" stroke="#e0307a" stroke-width="1"/>
<circle cx="501" cy="326" r="93" fill="url(#cWhite)" stroke="#e0e0f0" stroke-width="1.2" stroke-opacity=".9"/>
<circle cx="424" cy="187" r="24.5" fill="#2234b0" stroke="#4060e0" stroke-width="1"/>
<circle cx="349" cy="324" r="25" fill="#a01868" fill-opacity=".9" stroke="#e0408a" stroke-width="1"/>
<circle cx="508" cy="320" r="23" fill="#7a7a9e" stroke="#d0d0e4" stroke-width="1"/>
<g transform="translate(413.5,176.5) scale(1.17)" fill="none" stroke="#fff" stroke-width="1"><circle cx="8" cy="5" r="4"/><path d="M0.8 17.5 C0.8 12 3.5 10 8 10 C9.2 10 10 10.2 10.8 10.5 M0.8 17.5 H11"/><circle cx="14" cy="14.5" r="3.8"/><path d="M12.2 14.5l1.3 1.3 2.3-2.5"/></g><g transform="translate(338.5,313.5) scale(1.17)" fill="none" stroke="#fff" stroke-width="1"><circle cx="8" cy="5" r="4"/><path d="M0.8 17.5 C0.8 12 3.5 10 8 10 C9.2 10 10 10.2 10.8 10.5 M0.8 17.5 H11"/><circle cx="14" cy="14.5" r="3.8"/><path d="M12.2 14.5l1.3 1.3 2.3-2.5"/></g><g transform="translate(497.5,309.5) scale(1.17)" fill="none" stroke="#fff" stroke-width="1"><circle cx="8" cy="5" r="4"/><path d="M0.8 17.5 C0.8 12 3.5 10 8 10 C9.2 10 10 10.2 10.8 10.5 M0.8 17.5 H11"/><circle cx="14" cy="14.5" r="3.8"/><path d="M12.2 14.5l1.3 1.3 2.3-2.5"/></g>
<g transform="translate(61.3 49.5) rotate(-40)"><rect x="-30" y="-12.5" width="60" height="25" rx="12.5" fill="url(#logoG)"/></g>
<text x="98" y="60" font-size="32" letter-spacing="0.2" fill="#f4f4ff" filter="url(#tshadow)">销售渠道拓展</text>
<g><rect x="65" y="123" width="187" height="31.5" rx="15.75" fill="#3b5cff" opacity=".35" filter="url(#glow)"/>
<rect x="67" y="125" width="183" height="27.5" rx="13.75" fill="url(#pillg)" fill-opacity=".88" stroke="#5b7bff" stroke-width="1" stroke-opacity=".8"/>
<text x="158.5" y="140.75" text-anchor="middle" font-size="12" font-weight="500" letter-spacing="-0.4" fill="#fff">资源整合规划</text></g>
<g><rect x="32" y="215.5" width="191.5" height="30.5" rx="15.25" fill="#3b5cff" opacity=".35" filter="url(#glow)"/>
<rect x="34" y="217.5" width="187.5" height="26.5" rx="13.25" fill="url(#pillg)" fill-opacity=".88" stroke="#5b7bff" stroke-width="1" stroke-opacity=".8"/>
<text x="127.75" y="232.75" text-anchor="middle" font-size="12" font-weight="500" letter-spacing="-0.4" fill="#fff">服务质量保障</text></g>
<g><rect x="38" y="303" width="171" height="30" rx="15.0" fill="#3b5cff" opacity=".35" filter="url(#glow)"/>
<rect x="40" y="305" width="167" height="26" rx="13.0" fill="url(#pillg)" fill-opacity=".88" stroke="#5b7bff" stroke-width="1" stroke-opacity=".8"/>
<text x="123.5" y="320.00" text-anchor="middle" font-size="12" font-weight="500" letter-spacing="-0.4" fill="#fff">用户体验升级</text></g>
<g><rect x="60.5" y="394" width="181.5" height="31" rx="15.5" fill="#3b5cff" opacity=".35" filter="url(#glow)"/>
<rect x="62.5" y="396" width="177.5" height="27" rx="13.5" fill="url(#pillg)" fill-opacity=".88" stroke="#5b7bff" stroke-width="1" stroke-opacity=".8"/>
<text x="151.25" y="411.50" text-anchor="middle" font-size="12" font-weight="500" letter-spacing="-0.4" fill="#fff">销售策略创新</text></g>
<g><rect x="601.5" y="123" width="186.5" height="31.5" rx="15.75" fill="#3b5cff" opacity=".35" filter="url(#glow)"/>
<rect x="603.5" y="125" width="182.5" height="27.5" rx="13.75" fill="url(#pillg)" fill-opacity=".88" stroke="#5b7bff" stroke-width="1" stroke-opacity=".8"/>
<text x="694.75" y="140.75" text-anchor="middle" font-size="12" font-weight="500" letter-spacing="-0.4" fill="#fff">客户需求分析</text></g>
<g><rect x="642.5" y="215.5" width="170.5" height="30.5" rx="15.25" fill="#3b5cff" opacity=".35" filter="url(#glow)"/>
<rect x="644.5" y="217.5" width="166.5" height="26.5" rx="13.25" fill="url(#pillg)" fill-opacity=".88" stroke="#5b7bff" stroke-width="1" stroke-opacity=".8"/>
<text x="727.75" y="232.75" text-anchor="middle" font-size="12" font-weight="500" letter-spacing="-0.4" fill="#fff">品牌影响提升</text></g>
<g><rect x="642.5" y="303" width="165.5" height="30" rx="15.0" fill="#3b5cff" opacity=".35" filter="url(#glow)"/>
<rect x="644.5" y="305" width="161.5" height="26" rx="13.0" fill="url(#pillg)" fill-opacity=".88" stroke="#5b7bff" stroke-width="1" stroke-opacity=".8"/>
<text x="725.25" y="320.00" text-anchor="middle" font-size="12" font-weight="500" letter-spacing="-0.4" fill="#fff">渠道合作优化</text></g>
<g><rect x="606.5" y="394" width="187.5" height="31" rx="15.5" fill="#3b5cff" opacity=".35" filter="url(#glow)"/>
<rect x="608.5" y="396" width="183.5" height="27" rx="13.5" fill="url(#pillg)" fill-opacity=".88" stroke="#5b7bff" stroke-width="1" stroke-opacity=".8"/>
<text x="700.25" y="411.50" text-anchor="middle" font-size="12" font-weight="500" letter-spacing="-0.4" fill="#fff">市场趋势洞察</text></g>
</g></svg></div>

<svg style="left:188px;top:754px;overflow:hidden" width="893" height="96" viewBox="188 754 893 96"><g fill="none" stroke="#fff" stroke-width="1.2" opacity=".8"><circle cx="627" cy="550" r="221"/><circle cx="627" cy="550" r="284" stroke-dasharray="2 2"/><circle cx="627" cy="550" r="376" stroke-dasharray="2 2"/></g></svg>
<!-- RIGHT PANE -->
<div class="t" style="left:1095px;top:196.5px;font-size:15px;font-weight:bold;color:#242424;letter-spacing:.3px">eCopilot</div>
<svg style="left:1368px;top:200px" width="14" height="9" viewBox="0 0 14 9"><path d="M0.8 1l6.2 6.5 6.2-6.5" fill="none" stroke="#242424" stroke-width="1.1"/></svg>
<svg style="left:1401px;top:198px" width="12" height="12" viewBox="0 0 12 12"><path d="M0.8 0.8l10.4 10.4M11.2 0.8l-10.4 10.4" fill="none" stroke="#242424" stroke-width="1.1"/></svg>
<div class="a" style="left:1096px;top:226px;width:320px;height:648px;background:#808080"></div>
<svg style="left:1119px;top:243px" width="10" height="16" viewBox="0 0 10 16"><path d="M8.5 1L1.5 8l7 7" fill="none" stroke="#141414" stroke-width="1.4"/></svg>
<div class="t" style="left:1209px;top:245px;font-size:16px;font-weight:bold;color:#141414">一键生成PPT</div>
<div class="t" style="left:1116px;top:288px;font-size:14px;font-weight:bold;color:#0a0a0a">主题</div>
<div class="a" style="left:1116px;top:315px;width:280px;height:30px;border:1px solid #6e6e6e;border-radius:8px"></div>
<div class="a" style="left:1400px;top:226px;width:16px;height:45px;background:#fff"></div>
<svg style="left:1406px;top:243px" width="6" height="10" viewBox="0 0 6 10"><path d="M5 1L1 5l4 4" fill="none" stroke="#333" stroke-width="1.1"/></svg>
<div class="a" style="left:1108px;top:323px;width:296px;height:425px;background:#fff;border-radius:12px"></div>
<svg style="left:1185px;top:395px" width="150" height="140" viewBox="1185 395 150 140">
 <defs>
  <linearGradient id="rk" x1="0" y1="0" x2="0" y2="1"><stop offset="0" stop-color="#a9adb8"/><stop offset="1" stop-color="#c9ccd4"/></linearGradient>
  <linearGradient id="rkf" x1="0" y1="0" x2="0" y2="1"><stop offset="0" stop-color="#c4c7cf"/><stop offset="1" stop-color="#9da1ac"/></linearGradient>
  <linearGradient id="cl" x1="0" y1="0" x2="1" y2="0"><stop offset="0" stop-color="#dde1e9"/><stop offset="1" stop-color="#eceef3"/></linearGradient>
 </defs>
 <circle cx="1260" cy="462" r="61" fill="#f6f6fa"/>
 <path d="M1217 405h62a5 5 0 0 1 0 10h-50a5 5 0 0 1 0-10z M1192 421h116a7 7 0 0 1 7 7v0a7 7 0 0 1-7 7h-106a10 7 0 0 1-10-7v0a7 7 0 0 1 7-7z M1315 438h17a4 4 0 0 1 0 8h-17a4 4 0 0 1 0-8z M1191 465h12a3 3 0 0 1 0 6h-12a3 3 0 0 1 0-6z" fill="#f6f6fa"/>
 <path d="M1208 444a6 6 0 0 1 4-7a8 8 0 0 1 14 0a5 5 0 0 1 5 7z" fill="url(#cl)"/>
 <path d="M1279 430a4 4 0 0 1 3-5a6 6 0 0 1 10 0a4 4 0 0 1 3 5z" fill="url(#cl)"/>
 <ellipse cx="1253" cy="507" rx="60" ry="11" fill="#e8eaf0"/>
 <ellipse cx="1262" cy="517" rx="32" ry="10" fill="#e8eaf0"/>
 <ellipse cx="1258" cy="510" rx="9" ry="2" fill="#dadde5"/>
 <path d="M1214 479c-4 6-6 14-2 18h8c4-4 2-12-2-18z" fill="#e3e6ec"/><path d="M1214 492v8" stroke="#e3e6ec" stroke-width="1.5"/>
 <path d="M1298 479c-4 6-6 14-2 18h8c4-4 2-12-2-18z" fill="#e3e6ec"/><path d="M1290 485c-3 4-4 10-1 13h5c2-3 1-9-2-13z" fill="#e8eaf0"/>
 <path d="M1233 484l-7 12h14z" fill="#e3e6ec"/><path d="M1233 490v22l8 10" fill="none" stroke="#e3e6ec" stroke-width="1.2"/>
 <path d="M1245 452c-7 4-10.5 11-10.5 19c0 5 2 9.5 5 9.5l7.5-5z M1273 452c7 4 10.5 11 10.5 19c0 5-2 9.5-5 9.5l-7.5-5z" fill="url(#rkf)"/>
 <path d="M1259 424c-9 9-14 22-14 36c0 8 1 14 4 19h20c3-5 4-11 4-19c0-14-5-27-14-36z" fill="url(#rk)"/>
 <path d="M1259 424c-5 4.5-8.2 8.5-10.6 12.5h21.2c-2.4-4-5.6-8-10.6-12.5z" fill="#9a9ea9"/>
 <circle cx="1259" cy="448" r="6.5" fill="#aeb2bc" stroke="#eef0f6" stroke-width="2"/>
 <rect x="1250" y="475" width="18" height="2" fill="#a4a8b2"/>
 <path d="M1249.5 477c0 7 1.5 12 4 14.5l1.5-3c.8 3 2.2 5 4 7c1.8-2 3.2-4 4-7l1.5 3c2.5-2.5 4-7.5 4-14.5z" fill="#d4d7de"/>
 <path d="M1259 466c-2 4-3 10-3 14c0 4 1 7 3 9c2-2 3-5 3-9c0-4-1-10-3-14z" fill="#b6bac3"/>
</svg>
<div class="t" style="left:1210px;top:558px;font-size:16px;font-weight:bold;color:#141414">PPT生成中...</div>
<div class="t" style="left:1239px;top:591.5px;font-size:14px;color:#5aa0f8">11/21</div>
<div class="a" style="left:1154px;top:620px;width:204px;height:10px;border-radius:5px;background:#ebeef5"></div>
<div class="a" style="left:1154px;top:620px;width:108px;height:10px;border-radius:5px;background:#4096f8"></div>
<div class="a" style="left:1201px;top:657px;width:110px;height:32px;border:1px solid #8c8c8c;border-radius:5px;background:#fff"></div>
<div class="t" style="left:1232px;top:666px;font-size:12px;color:#141414">停止创建</div>

<!-- STATUS BAR -->
<div class="a" style="left:0;top:891px;width:1432px;height:23px;background:#f3f3f3;border-top:1px solid #fff"></div>
<div class="t" style="left:13px;top:896px;font-size:12px;color:#303030;word-spacing:1.2px">幻灯片 第 10 张，共 10 张</div>
<svg style="left:176px;top:896px" width="14" height="13" viewBox="0 0 14 13"><path d="M7 1.5C5.5 0.8 2.5 0.8 0.8 1.2V11C2.5 10.6 5.5 10.6 7 11.5M7 1.5C8.5 0.8 11.5 0.8 13.2 1.2V6M7 1.5V9M9 9.5l1.5 1.8 3-3.5" fill="none" stroke="#303030" stroke-width="1.1"/></svg>
<div class="t" style="left:207px;top:896px;font-size:12px;color:#303030">简体中文(中国大陆)</div>
<svg style="left:328px;top:895px" width="15" height="14" viewBox="0 0 15 14"><circle cx="7" cy="2.5" r="1.8" fill="none" stroke="#303030" stroke-width="1.1"/><path d="M1 5.5l4 1v3l-2 4M13 5.5l-4 1v3l2 4M8 9l4 4M12 9l-4 4" fill="none" stroke="#303030" stroke-width="1.1"/></svg>
<div class="t" style="left:346px;top:896px;font-size:12px;font-weight:bold;color:#303030">辅助功能: 调查</div>
<svg style="left:997px;top:895px" width="16" height="14" viewBox="0 0 16 14"><path d="M0.5 7.5h15M0.5 10.5h15M0.5 13.5h15M5.5 4l2.5-3 2.5 3" fill="none" stroke="#303030" stroke-width="1.1"/></svg>
<div class="t" style="left:1015px;top:896px;font-size:12px;color:#303030">备注</div>
<div class="a" style="left:1058px;top:892px;width:40px;height:21px;background:#e0e0e0"></div>
<svg style="left:1071px;top:896px" width="14" height="12" viewBox="0 0 14 12"><rect x="0.6" y="0.6" width="12.8" height="10.8" fill="none" stroke="#303030" stroke-width="1.1"/><path d="M3.5 0.6v10.8M3.5 8.5h9.9" fill="none" stroke="#303030" stroke-width="1.1"/><rect x="6" y="3" width="5" height="3" fill="none" stroke="#303030" stroke-width="1.1"/></svg>
<svg style="left:1111px;top:896px" width="14" height="12" viewBox="0 0 14 12"><rect x="0.6" y="0.6" width="5" height="4.3" fill="none" stroke="#303030" stroke-width="1.1"/><rect x="8.4" y="0.6" width="5" height="4.3" fill="none" stroke="#303030" stroke-width="1.1"/><rect x="0.6" y="7" width="5" height="4.3" fill="none" stroke="#303030" stroke-width="1.1"/><rect x="8.4" y="7" width="5" height="4.3" fill="none" stroke="#303030" stroke-width="1.1"/></svg>
<svg style="left:1151px;top:895px" width="14" height="14" viewBox="0 0 14 14"><path d="M7 2C5 1 2.5 1 0.6 1.5V12.5C2.5 12 5 12 7 13C9 12 11.5 12 13.4 12.5V1.5C11.5 1 9 1 7 2ZM7 2v11M2.5 4h3M2.5 6.5h3M2.5 9h3M8.5 4h3M8.5 6.5h3M8.5 9h3" fill="none" stroke="#303030" stroke-width="1.1"/></svg>
<svg style="left:1191px;top:895px" width="14" height="14" viewBox="0 0 14 14"><path d="M0.5 1h13M1.5 1v6.5h11V1M7 7.5v5M4 13h6" fill="none" stroke="#303030" stroke-width="1.1"/></svg>
<div class="a" style="left:1224px;top:901px;width:8px;height:1px;background:#303030"></div>
<div class="a" style="left:1237px;top:902px;width:100px;height:1px;background:#606060"></div>
<div class="a" style="left:1287px;top:899px;width:1px;height:7px;background:#606060"></div>
<div class="a" style="left:1268px;top:897px;width:5px;height:11px;background:#606060"></div>
<div class="a" style="left:1342px;top:901px;width:8px;height:1px;background:#303030"></div>
<div class="a" style="left:1345.5px;top:897.5px;width:1px;height:8px;background:#303030"></div>
<div class="t" style="left:1363px;top:896px;font-size:12px;color:#303030">67%</div>
<svg style="left:1400px;top:894px" width="15" height="15" viewBox="0 0 15 15"><rect x="4.6" y="4.6" width="5.8" height="5.8" fill="none" stroke="#303030" stroke-width="1.1" stroke-width="1.3"/><path d="M5.5 2l2-1.6 2 1.6M5.5 13l2 1.6 2-1.6M2 5.5L0.5 7.5 2 9.5M13 5.5l1.5 2-1.5 2" fill="none" stroke="#303030" stroke-width="1.1"/></svg>
<!-- NOTES -->
<div class="t" style="left:200px;top:859px;font-size:14.4px;color:#616161">单击此处添加备注</div>
<!-- slide area scrollbar -->
<div class="a" style="left:1064px;top:183px;width:17px;height:612px;background:#f5f5f5;border-radius:8px"></div>
<div class="a" style="left:1068px;top:687px;width:9px;height:47px;background:#757575;border-radius:5px"></div>
<svg style="left:1068px;top:185px" width="10" height="8" viewBox="0 0 10 8"><path d="M5 0.5L9.5 7.5H0.5Z" fill="#757575"/></svg>
<svg style="left:1068px;top:784px" width="10" height="8" viewBox="0 0 10 8"><path d="M5 7.5L9.5 0.5H0.5Z" fill="#757575"/></svg>
<svg style="left:1068px;top:798px" width="10" height="12" viewBox="0 0 10 12"><path d="M5 0L9.5 6H0.5Z M5 5L9.5 11H0.5Z" fill="#757575"/></svg>
<svg style="left:1068px;top:815px" width="10" height="12" viewBox="0 0 10 12"><path d="M5 6L9.5 0H0.5Z M5 11L9.5 5H0.5Z" fill="#757575"/></svg>
<!-- copilot button -->
<div class="a" style="left:201px;top:234px;width:32px;height:32px;background:#fff;border:1px solid #d6d6d6;border-radius:8px"></div>
<svg style="left:208px;top:242px" width="18" height="17" viewBox="0 0 18 17"><g fill="none" stroke="#222" stroke-width="1.1" stroke-linejoin="round"><path d="M5 1.6 H11.3 L8 13 Q7.4 14.6 5.8 13.6 L2.4 11.2 Q1.1 10.2 1.5 8.6 L3 3.5 Q3.5 1.6 5 1.6 Z"/><path d="M11.8 2.2 Q12.4 2.3 12.9 3.4 L15.4 5.4 Q16.8 6.5 16.4 8 L15 12.5 Q14.4 14.5 12.5 14.5 H7.7 L11 3.2 Q11.3 2.1 11.8 2.2 Z"/></g></svg>
</body></html>
